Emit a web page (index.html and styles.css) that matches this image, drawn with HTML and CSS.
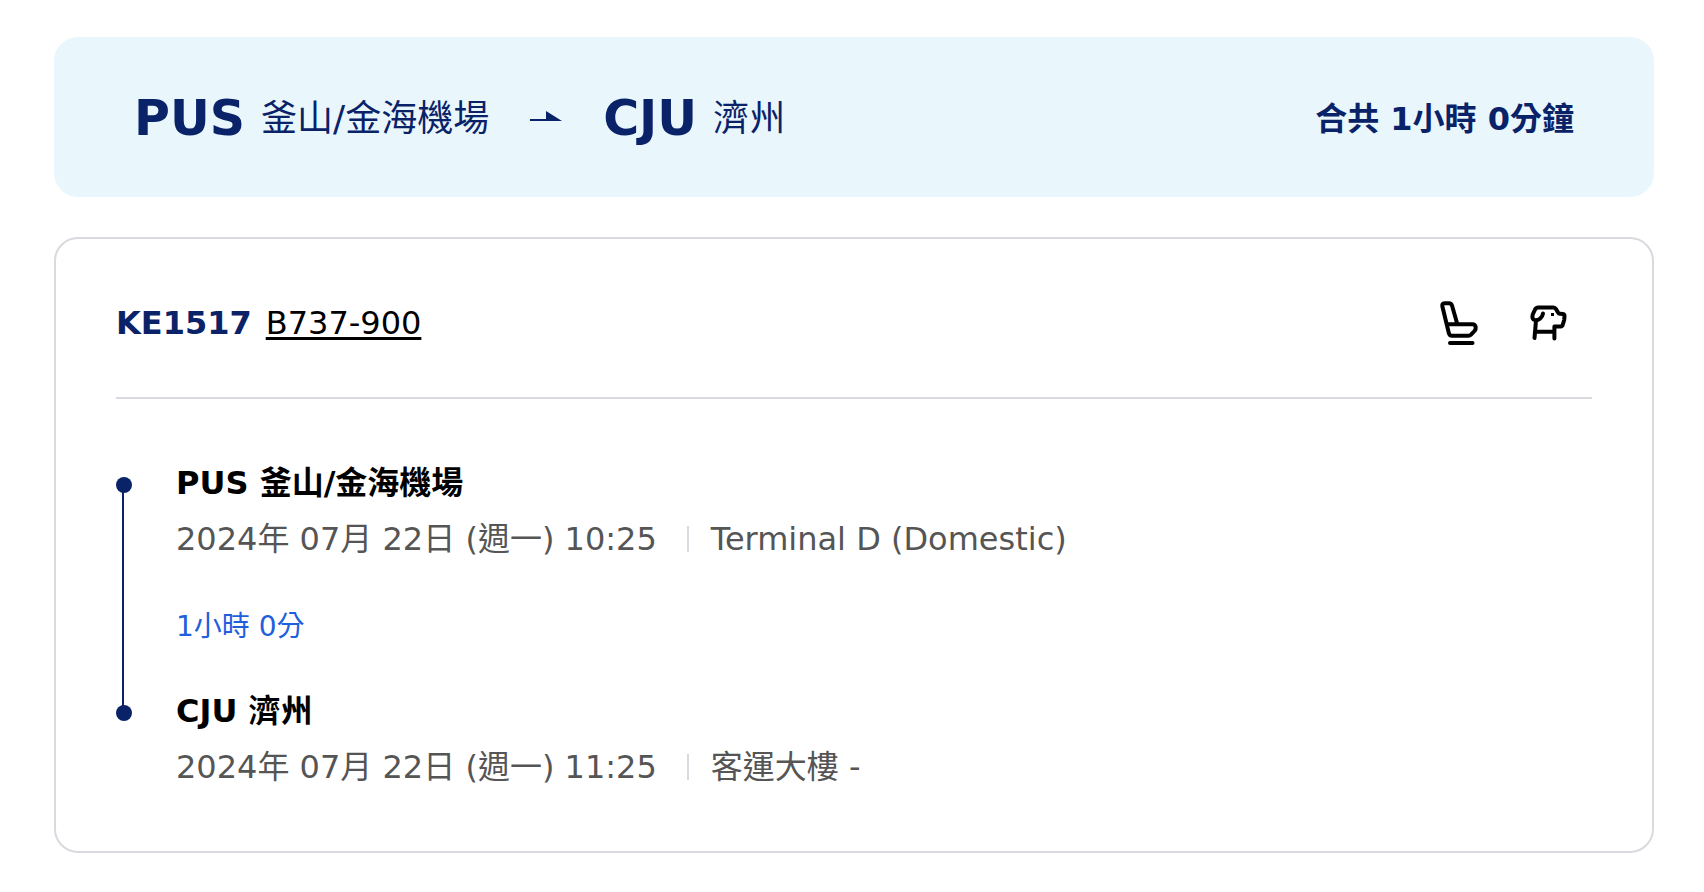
FILE: index.html
```html
<!DOCTYPE html>
<html lang="zh-Hant">
<head>
  <meta charset="UTF-8" />
  <meta name="viewport" content="width=device-width, initial-scale=1.0" />
  <title>PUS - CJU</title>
  <link rel="stylesheet" href="styles.css">
</head>
<body>
  <header class="summary">
    <h1 class="route">
      <span class="place"><strong class="code">PUS</strong> <span>釜山/金海機場</span></span>
      <svg class="arrow" viewBox="0 0 32 16" aria-hidden="true">
        <path d="M0 8h16V0l16 10H0z" />
      </svg>
      <span class="place"><strong class="code">CJU</strong> <span>濟州</span></span>
    </h1>
    <p class="total">合共 1小時 0分鐘</p>
  </header>

  <main class="card">
    <div class="flight">
      <h2 class="flight-name">
        <span class="flight-no">KE1517</span>
        <a class="aircraft" href="#">B737-900</a>
      </h2>
      <div class="services">
        <button class="icon-btn" type="button" aria-label="座位">
          <svg viewBox="0 0 60 60">
            <path d="M28 31 23 13.500Q22.300 11.300 20 11.300H15.500Q12.700 11.300 13.400 14.500L19.800 41Q20.500 43.700 23 43.700H39.500Q41 43.700 42 42.700L45.500 39Q47 37 46.700 35Q46 32.200 43.500 32.200H18" />
            <path d="M21 51h22.500" />
          </svg>
        </button>
        <button class="icon-btn" type="button" aria-label="寵物">
          <svg viewBox="0 0 60 60">
            <path d="M23 21.500C22.500 25.500 18.500 28.500 15.500 28.300C12.500 28 12 25.500 12.700 22.500L14.800 18Q15.700 15.400 18.500 15.400H33.500Q35 15.400 36 17L38 20.500Q38.700 21.700 40 21.800L43 22Q44.500 22.200 44.500 24L44.200 28L42.800 32.500Q42.400 34.400 40.500 34.400H34.400V46.500" />
            <path d="M16 28.500 14.500 46M15.500 39.700h18.500" />
            <path class="eye" d="M31 21h3v3h-3z" />
          </svg>
        </button>
      </div>
    </div>

    <ol class="timeline">
      <li class="stop">
        <h3 class="airport">PUS 釜山/金海機場</h3>
        <p class="detail"><time>2024年 07月 22日 (週一) 10:25</time><span class="terminal">Terminal D (Domestic)</span></p>
        <p class="duration">1小時 0分</p>
      </li>
      <li class="stop">
        <h3 class="airport">CJU 濟州</h3>
        <p class="detail"><time>2024年 07月 22日 (週一) 11:25</time><span class="terminal">客運大樓 -</span></p>
      </li>
    </ol>
  </main>
</body>
</html>
```

FILE: styles.css
```css
* {
  box-sizing: border-box;
  margin: 0;
  padding: 0;
}
body {
  font-family: Verdana, "DejaVu Sans", "Noto Sans CJK TC", sans-serif;
  font-size: 32px;
  line-height: 48px;
  color: #000;
  background: #fff;
  padding: 37px 50px 37px 54px;
}
.summary {
  display: flex;
  align-items: center;
  justify-content: space-between;
  min-height: 160px;
  padding: 4px 80px 0;
  border-radius: 24px;
  background: #e9f7fd;
  color: #0a2268;
}
.route {
  display: flex;
  align-items: center;
  gap: 41px;
  font-size: 36px;
  font-weight: 400;
}
.place {
  display: flex;
  align-items: center;
  gap: 16px;
}
.code {
  font-size: 49px;
  font-weight: 700;
}
.arrow {
  width: 32px;
  height: 16px;
  fill: currentColor;
}
.total { font-weight: 700; }

.card {
  margin-top: 40px;
  padding: 0 60px 54px;
  border: 2px solid #d9dae0;
  border-radius: 24px;
}
.flight {
  display: flex;
  align-items: center;
  justify-content: space-between;
  height: 160px;
  padding-top: 10px;
  border-bottom: 2px solid #d9dae0;
}
.flight-name {
  display: flex;
  gap: 14px;
  font-size: 32px;
  font-weight: 400;
}
.flight-no {
  color: #0a2268;
  font-weight: 700;
}
.aircraft {
  color: #000;
  text-decoration-thickness: 3px;
  text-underline-offset: 3px;
}
.services {
  display: flex;
  gap: 31px;
  padding: 0 12px 2px 0;
}
.icon-btn {
  width: 60px;
  height: 60px;
  border: none;
  background: none;
  cursor: pointer;
}
.icon-btn svg {
  display: block;
  fill: none;
  stroke: #000;
  stroke-width: 4;
  stroke-linecap: round;
  stroke-linejoin: round;
}
.icon-btn .eye {
  fill: #000;
  stroke: none;
}

.timeline {
  padding-top: 58px;
  list-style: none;
}
.stop {
  position: relative;
  padding-left: 60px;
}
/* dot and connecting line */
.stop::before {
  content: "";
  position: absolute;
  left: 0;
  top: 20px;
  width: 16px;
  height: 16px;
  border-radius: 50%;
  background: #0a2268;
}
.stop:not(:last-child)::after {
  content: "";
  position: absolute;
  left: 6px;
  top: 28px;
  width: 2px;
  height: 100%;
  background: #0a2268;
}
.airport {
  font-size: 32px;
  line-height: 52px;
}
.detail {
  display: flex;
  align-items: center;
  line-height: 60px;
  color: #555;
}
.terminal {
  display: flex;
  align-items: center;
}
.terminal::before {
  content: "";
  width: 2px;
  height: 26px;
  margin: 0 22px 0 30px;
  background: #d9dae0;
}
.duration {
  padding: 34px 0;
  font-size: 28px;
  color: #1f5fdc;
}
```
